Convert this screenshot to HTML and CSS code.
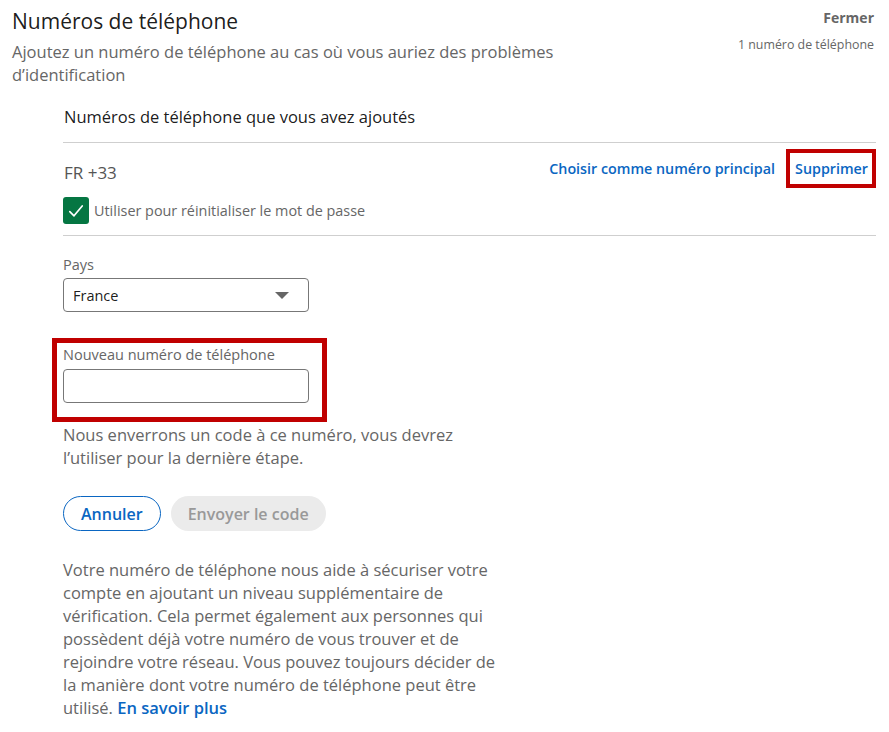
FILE: index.html
```html
<!DOCTYPE html>
<html lang="fr">

<head>
    <meta charset="UTF-8">
    <meta name="viewport" content="width=device-width, initial-scale=1.0">
    <title>Numéros de téléphone</title>
    <link rel="stylesheet" href="styles.css">
</head>

<body>
    <div class="header">
        <div class="header-text">
            <h1>Numéros de téléphone</h1>
            <p class="subtitle">Ajoutez un numéro de téléphone au cas où vous auriez des problèmes d’identification</p>
        </div>
        <div class="header-side">
            <a class="close-link" href="#">Fermer</a>
            <div class="count">1 numéro de téléphone</div>
        </div>
    </div>

    <div class="content">
        <h2 class="section-title">Numéros de téléphone que vous avez ajoutés</h2>

        <div class="phone-item">
            <div class="phone-row">
                <span class="phone-number">FR +33</span>
                <div class="phone-actions">
                    <a href="#" class="action-link">Choisir comme numéro principal</a>
                    <a href="#" class="action-link highlight-box">Supprimer</a>
                </div>
            </div>
            <label class="check-row">
                <span class="checkbox">
                    <svg width="18" height="18" viewBox="0 0 18 18">
                        <path d="M2.8 9.6 L7 13.8 L15.2 4" fill="none" stroke="#fff" stroke-width="1.7" stroke-linecap="round" stroke-linejoin="round" />
                    </svg>
                </span>
                <span class="check-label">Utiliser pour réinitialiser le mot de passe</span>
            </label>
        </div>

        <form class="add-form">
            <label class="field-label" for="country">Pays</label>
            <div class="select-box" id="country">
                <span>France</span>
                <span class="select-arrow"></span>
            </div>

            <div class="phone-field highlight-field">
                <label class="field-label" for="newPhone">Nouveau numéro de téléphone</label>
                <input type="text" id="newPhone" class="text-input">
            </div>

            <p class="help-text">Nous enverrons un code à ce numéro, vous devrez l’utiliser pour la dernière étape.</p>

            <div class="buttons">
                <button type="button" class="btn btn-secondary">Annuler</button>
                <button type="button" class="btn btn-disabled" disabled>Envoyer le code</button>
            </div>
        </form>

        <p class="info-text">Votre numéro de téléphone nous aide à sécuriser votre compte en ajoutant un niveau supplémentaire de vérification. Cela permet également aux personnes qui possèdent déjà votre numéro de vous trouver et de rejoindre votre réseau. Vous pouvez toujours décider de la manière dont votre numéro de téléphone peut être utilisé. <a href="#" class="learn-more">En savoir plus</a></p>
    </div>
</body>

</html>
```

FILE: styles.css
```css
body {
    margin: 0;
    font-family: "Segoe UI", "Open Sans", "Noto Sans", sans-serif;
    color: rgba(0, 0, 0, 0.9);
    background-color: #fff;
}

a {
    text-decoration: none;
}

.header {
    display: flex;
    justify-content: space-between;
    padding: 6px 15px 0 12px;
}

.header-text h1 {
    margin: 0;
    font-size: 21px;
    font-weight: 400;
    line-height: 30px;
}

.subtitle {
    margin: 4px 0 0;
    max-width: 560px;
    font-size: 16.5px;
    line-height: 23px;
    color: #666;
}

.header-side {
    text-align: right;
}

.close-link {
    display: inline-block;
    margin-top: 2px;
    font-size: 14px;
    font-weight: 700;
    color: #666;
}

.count {
    margin-top: 8px;
    font-size: 12.4px;
    color: #666;
}

.content {
    margin: 20px 13px 0 63px;
}

.section-title {
    margin: 0;
    padding: 0 0 14px 1px;
    font-size: 16.5px;
    font-weight: 400;
    line-height: 22px;
    border-bottom: 1px solid #cfcfcf;
}

.phone-item {
    border-bottom: 1px solid #cfcfcf;
    padding-bottom: 11px;
}

.phone-row {
    display: flex;
    justify-content: space-between;
    align-items: flex-start;
    padding-top: 6px;
}

.phone-number {
    padding: 12px 0 0 1px;
    font-size: 17px;
    line-height: 24px;
    color: #555;
}

.phone-actions {
    display: flex;
    align-items: center;
    gap: 11px;
}

.action-link {
    font-size: 14.3px;
    font-weight: 600;
    line-height: 20px;
    color: #0a66c2;
}

.highlight-box {
    padding: 6px 4px 5px 5px;
    border: 4px solid #c00000;
}

.check-row {
    display: flex;
    align-items: center;
    gap: 5px;
    margin-top: 9px;
}

.checkbox {
    display: flex;
    align-items: center;
    justify-content: center;
    width: 26px;
    height: 27px;
    border-radius: 3px;
    background-color: #057642;
}

.check-label {
    font-size: 14.4px;
    color: #666;
}

.add-form {
    padding-top: 19px;
}

.field-label {
    display: block;
    font-size: 14.5px;
    color: #666;
    line-height: 20px;
}

.select-box {
    display: flex;
    justify-content: space-between;
    align-items: center;
    box-sizing: border-box;
    width: 246px;
    height: 34px;
    margin-top: 3px;
    padding: 0 19px 0 9px;
    border: 1px solid #777;
    border-radius: 4px;
    font-size: 14.5px;
}

.select-arrow {
    width: 0;
    height: 0;
    border-left: 7px solid transparent;
    border-right: 7px solid transparent;
    border-top: 7px solid #666;
}

.highlight-field {
    box-sizing: border-box;
    width: 275px;
    margin: 26px 0 0 -11px;
    padding: 2px 6px 14px 6px;
    border: 5px solid #c00000;
}

.text-input {
    display: block;
    box-sizing: border-box;
    width: 246px;
    height: 34px;
    margin-top: 4px;
    border: 1px solid #777;
    border-radius: 4px;
}

.help-text {
    margin: 1px 0 0;
    max-width: 420px;
    font-size: 16.5px;
    line-height: 23px;
    color: #666;
}

.buttons {
    display: flex;
    gap: 10px;
    margin-top: 27px;
}

.btn {
    height: 35px;
    padding: 0 17px;
    border-radius: 18px;
    font-family: inherit;
    font-size: 16px;
    font-weight: 600;
}

.btn-secondary {
    border: 1px solid #0a66c2;
    background-color: #fff;
    color: #0a66c2;
}

.btn-disabled {
    border: none;
    background-color: #ebebeb;
    color: #999;
}

.info-text {
    margin: 27px 0 0;
    max-width: 436px;
    font-size: 16.5px;
    line-height: 23px;
    color: #666;
}

.learn-more {
    font-weight: 600;
    color: #0a66c2;
}
```
